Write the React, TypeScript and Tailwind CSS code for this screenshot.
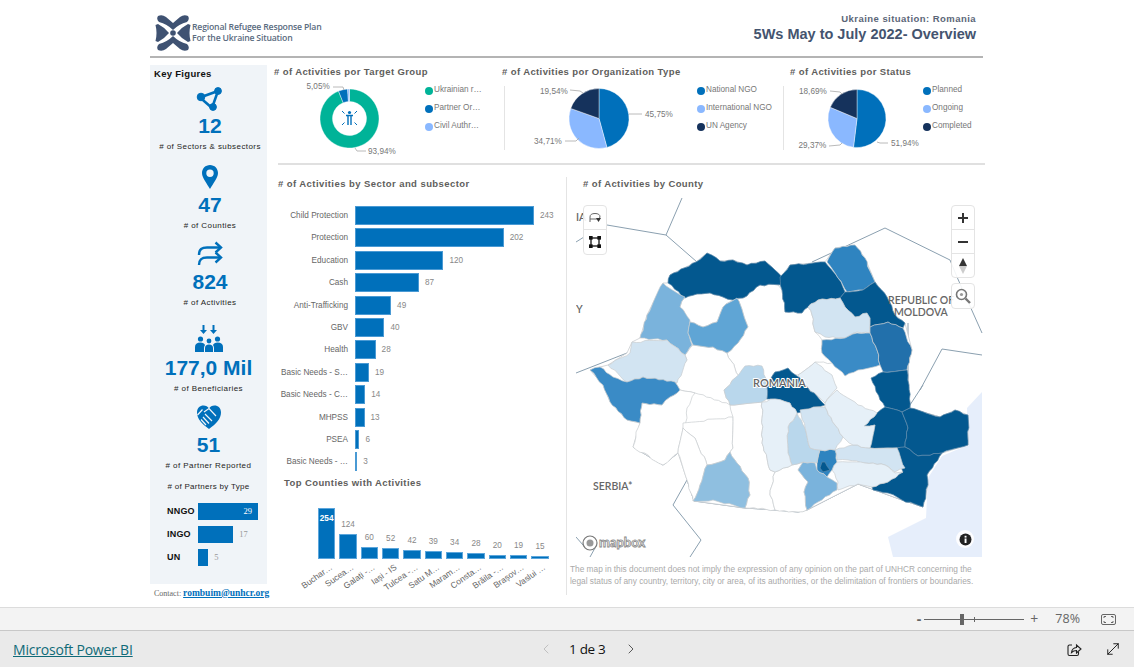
import { ChevronLeft, ChevronRight, MoveDiagonal } from "lucide-react";

const BLUE = "#0070bb";

const sectorBars = [
  { name: "Child Protection", value: 243 },
  { name: "Protection", value: 202 },
  { name: "Education", value: 120 },
  { name: "Cash", value: 87 },
  { name: "Anti-Trafficking", value: 49 },
  { name: "GBV", value: 40 },
  { name: "Health", value: 28 },
  { name: "Basic Needs - S…", value: 19 },
  { name: "Basic Needs - C…", value: 14 },
  { name: "MHPSS", value: 13 },
  { name: "PSEA", value: 6 },
  { name: "Basic Needs - …", value: 3 },
];

const countyBars = [
  { name: "Buchar…", value: 254 },
  { name: "Sucea…", value: 124 },
  { name: "Galați -…", value: 60 },
  { name: "Iași - IS", value: 52 },
  { name: "Tulcea -…", value: 42 },
  { name: "Satu M…", value: 39 },
  { name: "Maram…", value: 34 },
  { name: "Consta…", value: 28 },
  { name: "Brăila -…", value: 20 },
  { name: "Brașov…", value: 19 },
  { name: "Vaslui …", value: 15 },
];

const partnerBars = [
  { name: "NNGO", value: 29 },
  { name: "INGO", value: 17 },
  { name: "UN", value: 5 },
];

const DARK = "#03588f";
const MID = "#3a8bc6";
const SOFT = "#7ab3dc";
const PALE = "#d2e4f2";
const FAINT = "#e6f0f8";
const SKY = "#b9d7ec";

const romaniaOutline =
  "663,283 668,283 670,275 696,262 707,253 720,261 733,260 747,265 765,261 775,270 781,277 790,265 825,262 835,248 855,245 865,258 875,282 887,297 895,315 905,323 912,350 907,370 909,385 910,408 940,417 955,410 968,415 968,445 942,453 927,475 928,485 923,507 902,500 858,484 807,510 798,512 775,510 745,508 694,501 687,480 678,453 663,465 633,447 640,423 627,420 610,402 603,385 590,370 600,367 608,365 627,353 632,342 640,338 647,315";

// county shapes, in page coordinates
const counties: { fill: string; points: string }[] = [
  { fill: "#fff", points: "685,297 697,294 710,293 723,297 733,300 723,307 717,322 703,327 690,322 680,307" },
  { fill: "#fff", points: "737,298 743,298 760,285 778,285 782,290 785,312 802,313 808,307 812,315 815,332 822,340 822,353 832,363 815,362 798,375 775,372 767,387 745,388 727,353 738,343 748,327 743,313" },
  { fill: "#fff", points: "693,345 713,347 727,353 745,388 735,378 724,390 730,405 695,393 680,390 675,382 687,360 685,355" },
  { fill: "#fff", points: "640,423 642,403 662,405 670,397 680,390 695,393 687,408 687,418 683,428 678,453 663,465 633,447 636,432" },
  { fill: "#fff", points: "683,423 733,417 733,448 730,452 725,460 707,465 695,438 683,428" },
  { fill: "#fff", points: "730,405 762,402 762,443 770,470 775,472 770,495 775,510 745,508 750,495 748,478 737,463 730,452 733,448 733,417" },
  { fill: "#fff", points: "678,453 683,428 695,438 707,465 700,485 693,501 687,480" },
  { fill: "#fff", points: "775,472 792,465 803,462 798,470 808,482 804,492 807,510 798,512 775,510 770,495" },
  { fill: DARK, points: "668,283 670,275 696,262 707,253 720,261 733,260 747,265 765,261 775,270 782,277 782,285 760,285 743,298 733,300 723,297 710,293 697,294 685,298" },
  { fill: SOFT, points: "663,283 685,297 680,307 690,320 688,333 692,345 685,355 667,340 640,338 647,315" },
  { fill: "#5fa5d5", points: "737,298 743,313 748,327 738,343 727,353 713,347 693,345 688,333 690,322 703,327 717,322 723,307" },
  { fill: PALE, points: "632,342 667,340 685,355 687,360 677,383 643,377 627,382 608,365 630,353" },
  { fill: MID, points: "590,370 600,367 613,377 627,382 643,377 675,382 680,390 670,397 662,405 642,403 640,423 627,420 610,402 603,385" },
  { fill: "#8fbfe0", points: "730,452 737,463 748,478 750,495 745,508 713,500 693,501 700,485 707,465 725,460" },
  { fill: SKY, points: "735,378 745,366 762,366 767,387 767,399 762,402 730,405 724,390" },
  { fill: FAINT, points: "798,375 815,362 832,375 837,388 825,403 808,388" },
  { fill: DARK, points: "767,387 775,372 788,368 800,378 808,388 825,405 815,407 797,413 790,403 775,399 767,399" },
  { fill: DARK, points: "780,277 790,265 825,262 838,278 845,292 840,298 818,300 808,307 802,313 785,312 782,290" },
  { fill: "#2f84c0", points: "827,262 835,248 855,245 865,258 875,282 863,290 847,292 838,278" },
  { fill: DARK, points: "845,292 863,290 875,282 887,297 895,315 905,323 903,328 888,322 870,327 870,318 855,317 845,307 840,298" },
  { fill: PALE, points: "808,307 818,300 840,298 845,307 855,317 867,313 870,318 870,333 857,332 845,338 825,337 815,332 812,315" },
  { fill: MID, points: "822,340 845,338 857,333 870,333 877,350 880,365 858,370 845,376 832,363 822,353" },
  { fill: "#2270ab", points: "870,327 888,322 903,328 912,350 907,370 883,372 880,365 877,350 870,333" },
  { fill: DARK, points: "871,378 883,372 907,370 909,385 910,408 902,412 885,407 880,400" },
  { fill: DARK, points: "885,407 902,412 908,428 905,447 870,448 870,442 875,425 864,426 877,413" },
  { fill: DARK, points: "910,408 940,417 955,410 968,415 968,445 942,453 918,456 905,447 908,428 902,412" },
  { fill: DARK, points: "897,448 905,447 918,456 942,453 927,475 928,485 923,507 902,500 888,493 873,490 872,487 888,482 903,472 898,455" },
  { fill: PALE, points: "835,450 853,445 870,448 897,448 905,468 895,472 885,465 865,463 848,460 837,460" },
  { fill: FAINT, points: "837,462 848,462 865,463 885,465 895,473 903,472 888,482 872,487 858,484 838,490 838,482 832,470" },
  { fill: "#2f84c0", points: "820,450 835,450 837,462 832,470 827,477 817,470 817,463" },
  { fill: DARK, points: "822,462 825,462 830,470 823,472 820,468" },
  { fill: SOFT, points: "798,470 803,462 815,463 817,470 827,477 837,483 837,490 818,502 807,510 804,492 808,482" },
  { fill: SKY, points: "788,427 797,413 805,428 810,448 820,450 817,463 803,462 792,465 788,453" },
  { fill: PALE, points: "800,410 818,407 825,407 835,425 843,437 835,450 820,450 810,448 805,428" },
  { fill: FAINT, points: "825,403 837,390 858,405 877,413 864,426 875,425 870,448 853,445 843,437 835,425 825,407" },
  { fill: FAINT, points: "762,402 775,399 790,403 797,413 788,427 788,453 792,465 775,472 770,470 762,443" },
];

const borders = [
  "682,198 666,235",
  "607,225 666,235 697,262",
  "576,242 584,237",
  "576,373 627,353",
  "812,262 885,228 950,260 957,277 982,333",
  "920,390 942,349 982,355",
  "908,323 908,408 923,385",
  "908,408 940,417",
  "633,447 663,465 678,453",
  "687,480 673,505 701,540 690,557",
  "687,480 694,501 745,508 775,510",
  "775,510 798,512 807,510 858,484 902,500 923,507",
  "576,537 583,545",
  "590,557 595,548",
];

// wobble the straight county edges a bit; same offset for both counties sharing an edge
function roughen(points: string) {
  const pts = points.split(" ").map((p) => p.split(",").map(Number));
  const out: string[] = [];
  pts.forEach((a, i) => {
    const b = pts[(i + 1) % pts.length];
    out.push(`${a[0]},${a[1]}`);
    const fwd = a[0] < b[0] || (a[0] === b[0] && a[1] < b[1]);
    const [p, q] = fwd ? [a, b] : [b, a];
    const len = Math.hypot(q[0] - p[0], q[1] - p[1]);
    const n = Math.floor(len / 4);
    const seg: string[] = [];
    for (let k = 1; k < n; k++) {
      const t = k / n;
      const h = Math.sin(p[0] * 12.9898 + p[1] * 78.233 + k * 37.7) * 43758.5;
      const j = (h - Math.floor(h) - 0.5) * 1.8;
      const x = p[0] + (q[0] - p[0]) * t - ((q[1] - p[1]) / len) * j;
      const y = p[1] + (q[1] - p[1]) * t + ((q[0] - p[0]) / len) * j;
      seg.push(`${x.toFixed(1)},${y.toFixed(1)}`);
    }
    out.push(...(fwd ? seg : seg.reverse()));
  });
  return out.join(" ");
}

function arc(cx: number, cy: number, r: number, from: number, to: number, inner = 0) {
  const pt = (rad: number, pct: number) => {
    const a = (pct / 100) * Math.PI * 2 - Math.PI / 2;
    return `${(cx + rad * Math.cos(a)).toFixed(2)} ${(cy + rad * Math.sin(a)).toFixed(2)}`;
  };
  const large = to - from > 50 ? 1 : 0;
  if (inner === 0) {
    return `M${cx} ${cy}L${pt(r, from)}A${r} ${r} 0 ${large} 1 ${pt(r, to)}Z`;
  }
  return `M${pt(inner, from)}L${pt(r, from)}A${r} ${r} 0 ${large} 1 ${pt(r, to)}L${pt(inner, to)}A${inner} ${inner} 0 ${large} 0 ${pt(inner, from)}Z`;
}

interface Slice {
  pct: number;
  color: string;
}

interface Callout {
  text: string;
  x: number;
  y: number;
  line: string;
}

function PieCard(props: {
  title: string;
  x: number;
  width: number;
  svgWidth: number;
  cx: number;
  r: number;
  inner?: number;
  slices: Slice[];
  callouts: Callout[];
  legend: { name: string; color: string }[];
  children?: React.ReactNode;
}) {
  let start = 0;
  return (
    <div className="flex flex-col shrink-0" style={{ width: props.width }}>
      <div className="h-[13px] text-[9.5px] leading-[13px] font-bold tracking-[0.39px] text-[#605e5c] whitespace-nowrap">
        {props.title}
      </div>
      <div className="flex">
        <svg
          width={props.svgWidth}
          height={85}
          viewBox={`${props.x} 78 ${props.svgWidth} 85`}
          className="shrink-0"
        >
          {props.slices.map((s) => {
            const d = arc(props.cx, 118.5, props.r, start, start + s.pct, props.inner);
            start += s.pct;
            return <path key={s.color} d={d} fill={s.color} stroke="#fff" strokeWidth="0.4" />;
          })}
          {props.callouts.map((c) => (
            <g key={c.text}>
              <polyline points={c.line} fill="none" stroke="#a8a8a8" strokeWidth="0.8" />
              <text x={c.x} y={c.y + 3} fontSize="8.2" fill="#777">
                {c.text}
              </text>
            </g>
          ))}
          {props.children}
        </svg>
        <div className="flex flex-col pt-[3.5px]">
          {props.legend.map((l) => (
            <div key={l.name} className="h-[18px] flex items-center gap-[1px] whitespace-nowrap">
              <span className="w-[8px] h-[8px] rounded-full" style={{ backgroundColor: l.color }} />
              <span className="text-[8.2px] text-[#777]">{l.name}</span>
            </div>
          ))}
        </div>
      </div>
    </div>
  );
}

function Kpi(props: {
  icon: React.ReactNode;
  value: string;
  caption: string;
  className: string;
}) {
  return (
    <div className={`flex flex-col items-center shrink-0 ${props.className}`}>
      <div className="h-[28px] flex items-center justify-center">{props.icon}</div>
      <div className="h-[28px] leading-[28px] font-bold text-[21px] text-[#0070bb] whitespace-nowrap">
        {props.value}
      </div>
      <div className="h-[14px] leading-[14px] text-[8px] tracking-[0.42px] text-[#252423] whitespace-nowrap">
        {props.caption}
      </div>
    </div>
  );
}

function Logo() {
  return (
    <svg width="36" height="36" viewBox="0 0 36 36" fill="#3f5272" className="shrink-0">
      <path d="M3 1 Q7 -1 11 2 L18 8 L25 2 Q29 -1 33 1 Q35 4 32 7 Q24 9 18 15 Q12 9 4 7 Q1 4 3 1Z" />
      <path d="M3 35 Q7 37 11 34 L18 28 L25 34 Q29 37 33 35 Q35 32 32 29 Q24 27 18 21 Q12 27 4 29 Q1 32 3 35Z" />
      <path d="M0.500 10 L3 9 Q9 12 14 18 Q9 24 3 27 L0.500 26 Q2.500 18 0.500 10Z" />
      <path d="M35.500 10 L33 9 Q27 12 22 18 Q27 24 33 27 L35.500 26 Q33.500 18 35.500 10Z" />
      <circle cx="18" cy="18" r="2.8" />
    </svg>
  );
}

function NetworkIcon() {
  return (
    <svg width="28" height="28" viewBox="0 0 28 28" fill={BLUE} stroke={BLUE}>
      <path d="M4 13.5 L22 7 L16 24 Z" fill="none" strokeWidth="2.6" />
      <circle cx="5" cy="13" r="3.8" />
      <circle cx="22" cy="7" r="3.4" />
      <circle cx="17" cy="23" r="3.4" />
    </svg>
  );
}

function PinIcon() {
  return (
    <svg width="18" height="26" viewBox="0 0 18 26">
      <path
        fillRule="evenodd"
        fill={BLUE}
        d="M9 1C4.4 1 1 4.6 1 9c0 5 5 10.500 8 16 3-5.500 8-11 8-16 0-4.400-3.400-8-8-8Zm0 4.500a3.700 3.700 0 1 1 0 7.400 3.700 3.700 0 0 1 0-7.400Z"
      />
    </svg>
  );
}

function ArrowsIcon() {
  return (
    <svg width="28" height="28" viewBox="0 0 28 28" fill="none" stroke={BLUE} strokeWidth="2.4">
      <path d="M3 15 C3 9 6 7.500 11 7.500 H24" />
      <path d="M19.500 2.500 L25 7.500 L19.500 12.500" />
      <path d="M3 25 C3 19 6 17.500 11 17.500 H24" />
      <path d="M19.500 12.500 L25 17.500 L19.500 22.500" />
    </svg>
  );
}

function PeopleIcon() {
  return (
    <svg width="30" height="30" viewBox="0 0 30 30" fill={BLUE} stroke="none">
      <path d="M8.500 0 h2 v5 h2.500 l-3.500 4 -3.500 -4 h2.500z" />
      <path d="M18.500 0 h2 v5 h2.500 l-3.500 4 -3.500 -4 h2.500z" />
      <circle cx="6.500" cy="14" r="2.600" />
      <circle cx="15" cy="16" r="2.400" />
      <circle cx="23.500" cy="14" r="2.600" />
      <path d="M1 27 v-5 q0-4.500 5.500-4.500 q3.500 0 4.500 2.500 q-1 1.500-1 3 v4z" />
      <path d="M29 27 v-5 q0-4.500-5.500-4.500 q-3.500 0-4.500 2.500 q1 1.500 1 3 v4z" />
      <path d="M11 27 v-4 q0-3.500 4-3.500 q4 0 4 3.500 v4z" />
    </svg>
  );
}

function HandshakeIcon() {
  return (
    <svg width="26" height="26" viewBox="0 0 26 26">
      <path
        fill={BLUE}
        d="M13 25 C6 20 1 15 1 8.500 C1 4 4 1.500 7.500 1.500 C10 1.500 11.800 2.500 13 4.500 C14.200 2.500 16 1.500 18.500 1.500 C22 1.500 25 4 25 8.500 C25 15 20 20 13 25Z"
      />
      <path
        d="M1.500 11 L6.500 5.500 M8 8 L13 4.500 L20 12 M9 10 L16 17 M7 13 L13 19.500 M5 15.500 L10 21"
        stroke="#f0f4f8"
        strokeWidth="1.200"
        fill="none"
      />
    </svg>
  );
}

function MapControlBox(props: { children: React.ReactNode; className: string }) {
  return (
    <div
      className={`absolute w-[24px] bg-white/90 border border-[#e4e4e4] rounded-[4px] flex flex-col divide-y divide-[#e4e4e4] ${props.className}`}
    >
      {props.children}
    </div>
  );
}

function RomaniaMap() {
  return (
    <div className="relative w-[409px] h-[361px] bg-white">
      <svg width={409} height={361} viewBox="576 196 409 361" className="block">
        <path
          d="M982 392 L967 408 L968 445 L942 456 L928 478 L926 518 L888 537 L893 557 L982 557Z"
          fill="#e6eefb"
        />
        {borders.map((b) => (
          <polyline key={b} points={b} fill="none" stroke="#8ba0b0" strokeWidth="1" />
        ))}
        <polygon points={romaniaOutline} fill="#fff" stroke="#c9cdd0" strokeWidth="0.8" />
        {counties.map((c) => (
          <polygon
            key={c.points}
            points={roughen(c.points)}
            fill={c.fill}
            stroke={c.fill === DARK ? "#5d89aa" : "#c9cdd0"}
            strokeWidth="0.7"
            strokeLinejoin="round"
          />
        ))}
        <g fontFamily="Lato, sans-serif" fontWeight="600" fontSize="10.500" fill="#666">
          <text x="888" y="304">REPUBLIC OF</text>
          <text x="894" y="316">MOLDOVA</text>
          <text x="753" y="387" fontSize="11" stroke="#fff" strokeWidth="2" paintOrder="stroke">ROMANIA</text>
          <text x="593" y="490">SERBIA*</text>
          <text x="576" y="313">Y</text>
          <text x="576" y="221">IA</text>
        </g>
        <circle cx="590" cy="543" r="7" fill="#fff" stroke="#777" strokeWidth="1.200" />
        <circle cx="590" cy="543" r="3.500" fill="#999" />
        <text
          x="599"
          y="547"
          fontFamily="Lato, sans-serif"
          fontSize="13"
          fontWeight="700"
          fill="#fff"
          stroke="#888"
          strokeWidth="0.8"
        >
          mapbox
        </text>
      </svg>

      <MapControlBox className="left-[7px] top-[9px]">
        <div className="h-[24px] flex items-center justify-center">
          <svg width="14" height="14" viewBox="0 0 14 14" fill="none" stroke="#666" strokeWidth="1">
            <path d="M2 11 V6 Q2 2.500 7 2.500 Q12 2.500 12 6 Q12 8 9 8 H2" />
            <path d="M8 7 H13 L10.500 11 Z" fill="#333" stroke="none" />
          </svg>
        </div>
        <div className="h-[24px] flex items-center justify-center">
          <svg width="12" height="12" viewBox="0 0 12 12" fill="none" stroke="#111" strokeWidth="1.300">
            <rect x="2" y="2" width="8" height="8" />
            <rect x="0.500" y="0.500" width="2.500" height="2.500" fill="#111" />
            <rect x="9" y="0.500" width="2.500" height="2.500" fill="#111" />
            <rect x="0.500" y="9" width="2.500" height="2.500" fill="#111" />
            <rect x="9" y="9" width="2.500" height="2.500" fill="#111" />
          </svg>
        </div>
      </MapControlBox>

      <MapControlBox className="left-[375px] top-[9px]">
        <div className="h-[24px] flex items-center justify-center">
          <svg width="10" height="10" viewBox="0 0 10 10" fill="#333">
            <rect x="0" y="4" width="10" height="2" />
            <rect x="4" y="0" width="2" height="10" />
          </svg>
        </div>
        <div className="h-[24px] flex items-center justify-center">
          <svg width="10" height="10" viewBox="0 0 10 10" fill="#333">
            <rect x="0" y="4" width="10" height="2" />
          </svg>
        </div>
        <div className="h-[23px] flex items-center justify-center">
          <svg width="8" height="16" viewBox="0 0 8 16">
            <path d="M4 0 L8 8 H0 Z" fill="#333" />
            <path d="M4 16 L8 8 H0 Z" fill="#ccc" />
          </svg>
        </div>
      </MapControlBox>

      <MapControlBox className="left-[375px] top-[87px]">
        <div className="h-[24px] flex items-center justify-center">
          <svg width="16" height="16" viewBox="0 0 16 16" fill="none" stroke="#777" strokeWidth="1.600">
            <circle cx="6.500" cy="6.500" r="5" />
            <circle cx="6.500" cy="6.500" r="1.600" fill="#999" stroke="none" />
            <path d="M10.500 10.500 L15 15" strokeWidth="2.400" />
          </svg>
        </div>
      </MapControlBox>

      <div className="absolute left-[380px] top-[334px] w-[18px] h-[18px] rounded-full bg-white/90 flex items-center justify-center">
        <svg width="13" height="13" viewBox="0 0 13 13">
          <circle cx="6.500" cy="6.500" r="6" fill="#222" />
          <rect x="5.600" y="5.500" width="1.900" height="4.500" fill="#fff" />
          <rect x="5.600" y="2.800" width="1.900" height="1.800" fill="#fff" />
        </svg>
      </div>
    </div>
  );
}

export default function App() {
  return (
    <div className="w-[1134px] h-[667px] overflow-hidden flex flex-col bg-white font-['Liberation_Sans',Arial,sans-serif]">
      <div className="h-[607px] pl-[150px] shrink-0">
        {/* header */}
        <div className="w-[833px] h-[58px] border-b-2 border-[#b4b4b4] flex items-start justify-between pl-[5px] pr-[7px]">
          <div className="flex items-center gap-[1px] pt-[15px]">
            <Logo />
            <div className="flex flex-col font-['Open_Sans',sans-serif] text-[8.7px] leading-[11px] text-[#5a6b80] font-semibold tracking-[-0.2px] whitespace-nowrap">
              <span>Regional Refugee Response Plan</span>
              <span>For the Ukraine Situation</span>
            </div>
          </div>
          <div className="flex flex-col items-end pt-[12px]">
            <span className="text-[9.5px] leading-[13px] font-bold tracking-[0.45px] text-[#5b6678]">
              Ukraine situation: Romania
            </span>
            <span className="text-[14.5px] leading-[19px] font-bold text-[#44546f]">
              5Ws May to July 2022- Overview
            </span>
          </div>
        </div>

        <div className="flex">
          {/* key figures */}
          <div className="w-[120px] shrink-0 flex flex-col">
            <div className="mt-[7px] w-[117px] h-[519px] bg-[#f0f4f8] flex flex-col">
              <div className="pl-[4px] h-[12px] pt-[3px] text-[9.5px] leading-[12px] font-bold tracking-[0.3px] text-[#111]">
                Key Figures
              </div>
              <Kpi icon={<NetworkIcon />} value="12" caption="# of Sectors & subsectors" className="mt-[7px] pl-[3px]" />
              <Kpi icon={<PinIcon />} value="47" caption="# of Counties" className="mt-[9px] pl-[3px]" />
              <Kpi icon={<ArrowsIcon />} value="824" caption="# of Activities" className="mt-[7px] pl-[3px]" />
              <Kpi icon={<PeopleIcon />} value="177,0 Mil" caption="# of Beneficiaries" className="mt-[16px]" />
              <Kpi icon={<HandshakeIcon />} value="51" caption="# of Partner Reported" className="mt-[7px]" />
              <div className="mt-[8px] h-[12px] text-center text-[8px] leading-[12px] tracking-[0.3px] text-[#252423]">
                # of Partners by Type
              </div>
              <div className="mt-[10px] flex flex-col gap-[6px]">
                {partnerBars.map((p) => (
                  <div key={p.name} className="flex items-center h-[17px]">
                    <span className="w-[48px] pl-[17px] text-[9px] font-bold tracking-[0.2px] text-[#111]">
                      {p.name}
                    </span>
                    <div
                      className="h-[17px] bg-[#0070bb] flex items-center justify-end pr-[6px]"
                      style={{ width: p.value * 2.07 }}
                    >
                      {p.value === 29 && (
                        <span className="font-['Liberation_Serif',serif] text-[8.5px] text-white">29</span>
                      )}
                    </div>
                    {p.value !== 29 && (
                      <span className="ml-[6px] font-['Liberation_Serif',serif] text-[8.5px] text-[#999]">
                        {p.value}
                      </span>
                    )}
                  </div>
                ))}
              </div>
            </div>
            <div className="mt-[1px] pl-[4px] h-[12px] whitespace-nowrap font-['Liberation_Serif',serif] leading-[12px]">
              <span className="text-[8px] text-[#666]">Contact: </span>
              <span className="text-[9.5px] font-bold underline text-[#0070bb]">rombuim@unhcr.org</span>
            </div>
          </div>

          <div className="w-[715px] flex flex-col">
            {/* pies */}
            <div className="h-[105px] pl-[4px] pt-[7px] flex">
              <PieCard
                title="# of Activities por Target Group"
                x={274}
                width={228}
                svgWidth={151}
                cx={349.5}
                r={29.5}
                inner={17}
                slices={[
                  { pct: 93.94, color: "#00b398" },
                  { pct: 5.05, color: "#0070bb" },
                  { pct: 1.01, color: "#8ab8ff" },
                ]}
                callouts={[
                  { text: "5,05%", x: 306.5, y: 86, line: "333,87 343,87 344,90" },
                  { text: "93,94%", x: 368, y: 151, line: "355,148 357,151 366,151" },
                ]}
                legend={[
                  { name: "Ukrainian r…", color: "#00b398" },
                  { name: "Partner Or…", color: "#0070bb" },
                  { name: "Civil Authr…", color: "#8ab8ff" },
                ]}
              >
                <g stroke={BLUE} fill={BLUE} strokeWidth="1">
                  <circle cx="349.500" cy="112.500" r="1.600" stroke="none" />
                  <path d="M346 115.500 H353 M348 115.500 V125 M351 115.500 V125" strokeWidth="1.400" />
                  <path d="M342 111 L344.500 113.500 M357 111 L354.500 113.500 M342 125 L344.500 122.500 M357 125 L354.500 122.500" />
                </g>
              </PieCard>
              <div className="w-px h-[64px] mt-[21px] bg-[#e4e4e4] absolute left-[504px]" />
              <PieCard
                title="# of Activities por Organization Type"
                x={502}
                width={288}
                svgWidth={195}
                cx={599}
                r={30}
                slices={[
                  { pct: 45.75, color: "#0070bb" },
                  { pct: 34.71, color: "#8ab8ff" },
                  { pct: 19.54, color: "#15325c" },
                ]}
                callouts={[
                  { text: "19,54%", x: 540, y: 91, line: "570,90 580,91 583,93" },
                  { text: "45,75%", x: 645, y: 114, line: "629,114 642,114" },
                  { text: "34,71%", x: 534, y: 141, line: "565,141 576,141 579,138" },
                ]}
                legend={[
                  { name: "National NGO", color: "#0070bb" },
                  { name: "International NGO", color: "#8ab8ff" },
                  { name: "UN Agency", color: "#15325c" },
                ]}
              />
              <div className="w-px h-[64px] mt-[21px] bg-[#e4e4e4] absolute left-[783px]" />
              <PieCard
                title="# of Activities por Status"
                x={790}
                width={195}
                svgWidth={133}
                cx={857}
                r={29}
                slices={[
                  { pct: 51.94, color: "#0070bb" },
                  { pct: 29.37, color: "#8ab8ff" },
                  { pct: 18.69, color: "#15325c" },
                ]}
                callouts={[
                  { text: "18,69%", x: 799, y: 91, line: "830,91 840,92 842,94" },
                  { text: "51,94%", x: 891, y: 143, line: "877,142 880,143 888,143" },
                  { text: "29,37%", x: 798.5, y: 145, line: "829,146 840,145 842,143" },
                ]}
                legend={[
                  { name: "Planned", color: "#0070bb" },
                  { name: "Ongoing", color: "#8ab8ff" },
                  { name: "Completed", color: "#15325c" },
                ]}
              />
            </div>
            <div className="ml-[8px] h-[2px] bg-[#e0e0e0]" />

            <div className="flex">
              {/* bars */}
              <div className="w-[288px] ml-[8px] shrink-0 flex flex-col pt-[12px]">
                <div className="h-[14px] text-[9.5px] leading-[14px] font-bold tracking-[0.43px] text-[#605e5c] whitespace-nowrap">
                  # of Activities by Sector and subsector
                </div>
                <div className="mt-[15px] flex flex-col">
                  {sectorBars.map((b) => (
                    <div key={b.name} className="h-[22.4px] flex items-start">
                      <span className="w-[70px] h-[19px] leading-[19px] text-right text-[8.2px] text-[#666] whitespace-nowrap">
                        {b.name}
                      </span>
                      <div
                        className="ml-[7px] h-[19px] bg-[#0070bb] border border-[#4a9ad4]"
                        style={{ width: b.value * 0.7365 }}
                      />
                      <span className="ml-[6px] h-[19px] leading-[19px] text-[8.2px] text-[#888]">{b.value}</span>
                    </div>
                  ))}
                </div>
                <div className="mt-[1px] ml-[6px] h-[14px] text-[9.5px] leading-[14px] font-bold tracking-[0.4px] text-[#605e5c] whitespace-nowrap">
                  Top Counties with Activities
                </div>
                <div className="ml-[38px] mt-[7px] h-[62px] flex items-end">
                  {countyBars.map((c, i) => (
                    <div key={c.name} className="relative w-[21.33px] shrink-0 flex flex-col items-center">
                      {i > 0 && <span className="text-[8.2px] leading-[12px] mb-[3px] text-[#888]">{c.value}</span>}
                      <div
                        className="w-[17.5px] bg-[#0070bb] border border-[#5ca6dc] flex justify-center"
                        style={{ height: c.value * 0.2 }}
                      >
                        {i === 0 && <span className="mt-[4px] text-[8.2px] font-bold text-white">254</span>}
                      </div>
                      <span className="absolute top-full right-[9px] mt-[3px] text-[8.5px] leading-[10px] text-[#666] whitespace-nowrap origin-top-right -rotate-[35deg]">
                        {c.name}
                      </span>
                    </div>
                  ))}
                </div>
              </div>

              {/* map */}
              <div className="flex-1 flex flex-col mt-[12px] border-l border-[#e4e4e4] h-[418px]">
                <div className="pl-[16px] h-[14px] text-[9.5px] leading-[14px] font-bold tracking-[0.4px] text-[#605e5c]">
                  # of Activities by County
                </div>
                <div className="ml-[9px] mt-[5px]">
                  <RomaniaMap />
                </div>
                <div className="ml-[3px] mt-[6px] text-[8.3px] leading-[12px] text-[#aaa] whitespace-nowrap">
                  <p>The map in this document does not imply the expression of any opinion on the part of UNHCR concerning the</p>
                  <p>legal status of any country, territory, city or area, of its authorities, or the delimitation of frontiers or boundaries.</p>
                </div>
              </div>
            </div>
          </div>
        </div>
      </div>

      {/* zoom bar */}
      <div className="h-[24px] shrink-0 bg-[#f3f3f3] border-y border-y-[#dcdcdc] border-b-[#c8c8c8] flex items-center justify-end font-['Open_Sans',sans-serif] text-[#666]">
        <span className="text-[14px] font-bold leading-none">-</span>
        <div className="relative ml-[3px] w-[100px] h-px bg-[#666]">
          <div className="absolute left-[36px] -top-[5px] w-[4px] h-[11px] bg-[#666]" />
          <div className="absolute left-[50px] -top-[2px] w-px h-[5px] bg-[#666]" />
        </div>
        <span className="ml-[6px] text-[14px] leading-none">+</span>
        <span className="ml-[17px] text-[12.5px]">78%</span>
        <svg width="15" height="11" viewBox="0 0 15 11" fill="none" stroke="#666" className="ml-[21px] mr-[18px]">
          <rect x="0.500" y="0.500" width="14" height="10" rx="1.500" />
          <path d="M3 4 V2.500 H5 M10 2.500 H12 V4 M3 7 V8.500 H5 M10 8.500 H12 V7" />
        </svg>
      </div>

      {/* pagination bar */}
      <div className="flex-1 bg-[#eaeaea] flex items-center relative font-['Open_Sans',sans-serif]">
        <a className="ml-[13px] text-[14px] text-[#0f6a78] underline tracking-[-0.2px]">Microsoft Power BI</a>
        <div className="absolute left-[538px] flex items-center">
          <ChevronLeft size={16} className="text-[#b5b5b5]" strokeWidth={1.2} />
          <span className="ml-[15px] text-[13.5px] font-medium tracking-[-0.3px] text-[#111]">1 de 3</span>
          <ChevronRight size={16} className="ml-[17px] text-[#333]" strokeWidth={1.2} />
        </div>
        <svg width="15" height="15" viewBox="0 0 15 15" fill="none" stroke="#222" strokeWidth="1.100" className="absolute left-[1067px]">
          <path d="M5 3 H2.500 Q1 3 1 4.500 V12 Q1 13.500 2.500 13.500 H10 Q11.500 13.500 11.500 12 V10" />
          <path d="M4.500 10.500 Q5 6 9.500 5.500 V3 L14 7 L9.500 11 V8.500 Q6.500 8.500 4.500 10.500Z" />
        </svg>
        <MoveDiagonal size={18} strokeWidth={1.2} className="absolute left-[1104px] text-[#111]" />
      </div>
    </div>
  );
}
